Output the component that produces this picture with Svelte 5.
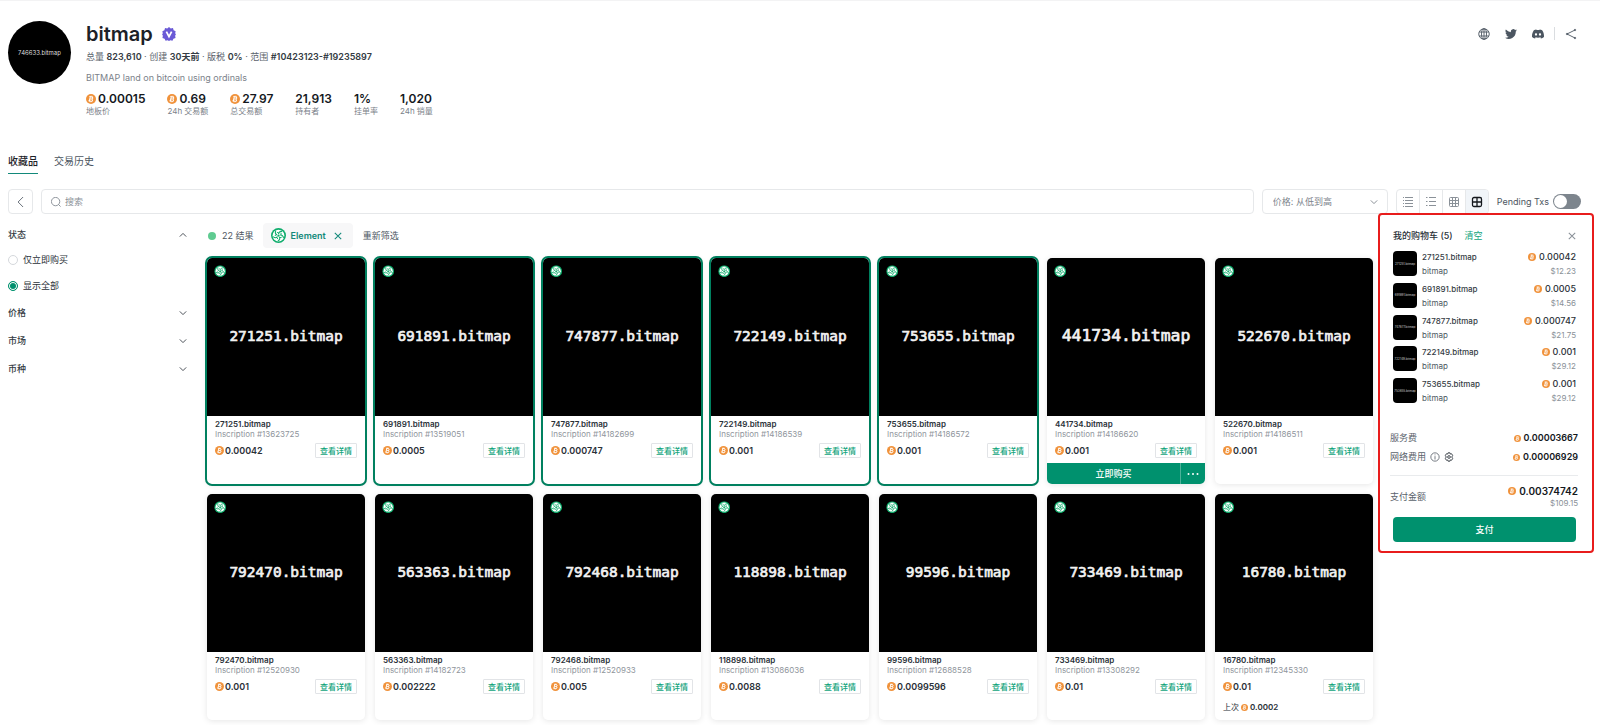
<script lang="ts">
  let search = '';
  let sort = 'asc';
  let status = 'all';
  let view = 'large';
  let pending = false;

  const stats = [
    { value: '0.00015', label: '地板价', btc: true },
    { value: '0.69', label: '24h 交易额', btc: true },
    { value: '27.97', label: '总交易额', btc: true },
    { value: '21,913', label: '持有者', btc: false },
    { value: '1%', label: '挂单率', btc: false },
    { value: '1,020', label: '24h 销量', btc: false }
  ];

  const items = [
    { name: '271251.bitmap', no: '13623725', price: '0.00042', selected: true },
    { name: '691891.bitmap', no: '13519051', price: '0.0005', selected: true },
    { name: '747877.bitmap', no: '14182699', price: '0.000747', selected: true },
    { name: '722149.bitmap', no: '14186539', price: '0.001', selected: true },
    { name: '753655.bitmap', no: '14186572', price: '0.001', selected: true },
    { name: '441734.bitmap', no: '14186620', price: '0.001', active: true },
    { name: '522670.bitmap', no: '14186511', price: '0.001' },
    { name: '792470.bitmap', no: '12520930', price: '0.001' },
    { name: '563363.bitmap', no: '14182723', price: '0.002222' },
    { name: '792468.bitmap', no: '12520933', price: '0.005' },
    { name: '118898.bitmap', no: '13086036', price: '0.0088' },
    { name: '99596.bitmap', no: '12688528', price: '0.0099596' },
    { name: '733469.bitmap', no: '13308292', price: '0.01' },
    { name: '16780.bitmap', no: '12345330', price: '0.01', last: '0.0002' }
  ];

  const cart = [
    { name: '271251.bitmap', price: '0.00042', usd: '$12.23' },
    { name: '691891.bitmap', price: '0.0005', usd: '$14.56' },
    { name: '747877.bitmap', price: '0.000747', usd: '$21.75' },
    { name: '722149.bitmap', price: '0.001', usd: '$29.12' },
    { name: '753655.bitmap', price: '0.001', usd: '$29.12' }
  ];

  const views = ['detail', 'list', 'small', 'large'];
  const filters = ['价格', '市场', '币种'];
  const blades = [0, 72, 144, 216, 288];
</script>

<!-- shared symbols -->
<svg class="defs" aria-hidden="true">
  <symbol id="btc" viewBox="0 0 16 16">
    <circle cx="8" cy="8" r="8" fill="#f0923b" />
    <g transform="rotate(12 8 8)" fill="none" stroke="#fff" stroke-width="1.5">
      <path d="M6 4.500v7M4.600 4.500H8.800a1.700 1.700 0 0 1 0 3.400H6M8.800 7.900h.4a1.800 1.800 0 0 1 0 3.600H4.600" />
      <path d="M7 2.800v1.700M9 2.800v1.700M7 11.500v1.700M9 11.500v1.700" stroke-width="1" />
    </g>
  </symbol>
  <symbol id="element" viewBox="0 0 24 24">
    <circle cx="12" cy="12" r="12" fill="#10ad6d" />
    <circle cx="12" cy="12" r="9.4" fill="#fff" />
    {#each blades as deg}
      <path d="M12 9.600C12.400 7 14.500 5.200 18 5.400" fill="none" stroke="#10ad6d" stroke-width="1.7" transform="rotate({deg} 12 12)" />
      <path d="M12.200 7.800 9.400 6.800" fill="none" stroke="#10ad6d" stroke-width="1.4" transform="rotate({deg} 12 12)" />
    {/each}
    <circle cx="12" cy="12" r="1.800" fill="#10ad6d" />
  </symbol>
  <symbol id="chevron" viewBox="0 0 10 10">
    <path d="m1 3 4 4 4-4" fill="none" stroke="currentColor" stroke-width="1.1" />
  </symbol>
  <symbol id="close" viewBox="0 0 10 10">
    <path d="m1 1 8 8M9 1 1 9" fill="none" stroke="currentColor" stroke-width="1.3" />
  </symbol>
</svg>

<div class="page">
  <header>
    <div class="avatar">746633.bitmap</div>
    <div class="info">
      <h1>
        bitmap
        <svg class="badge" viewBox="0 0 24 24">
          <path d="m12 0 3 2.4 3.8-.5 1.1 3.7 3.5 1.7-.9 3.7L24 12l-1.5 3.2.7 3.7-3.6 1.4-1.7 3.3-3.5-.8L12 24l-2.400-1.200-3.500.8-1.700-3.300-3.600-1.400.7-3.700L0 12l1.500-1-.9-3.700 3.500-1.700 1.100-3.700 3.800.5z" fill="#6a5ad6" />
          <path d="m7.500 8 4.500 8.500L16.500 8" fill="none" stroke="#fff" stroke-width="3" />
        </svg>
      </h1>
      <p class="meta">总量 <b>823,610</b> · 创建 <b>30天前</b> · 版税 <b>0%</b> · 范围 <b>#10423123-#19235897</b></p>
      <p class="desc">BITMAP land on bitcoin using ordinals</p>
      <dl class="stats">
        {#each stats as s}
          <div>
            <dd>{#if s.btc}<svg class="btc"><use href="#btc" /></svg>{/if}{s.value}</dd>
            <dt>{s.label}</dt>
          </div>
        {/each}
      </dl>
    </div>
    <nav class="social">
      <a href="#site" aria-label="Website">
        <svg viewBox="0 0 24 24" fill="none" stroke="currentColor" stroke-width="1.8"><circle cx="12" cy="12" r="10.5" /><ellipse cx="12" cy="12" rx="5" ry="10.5" /><path d="M2.5 8h19M2.5 16h19M12 1.5v21" /></svg>
      </a>
      <a href="#twitter" aria-label="Twitter">
        <svg viewBox="0 0 24 24" fill="currentColor"><path d="M24 4.6a10 10 0 0 1-2.8.8 5 5 0 0 0 2.1-2.7c-1 .6-2 1-3.1 1.200a4.900 4.900 0 0 0-8.400 4.500A14 14 0 0 1 1.700 3.200a4.900 4.900 0 0 0 1.500 6.500 4.900 4.900 0 0 1-2.200-.6c0 2.300 1.600 4.400 3.900 4.900a5 5 0 0 1-2.200.1 4.900 4.900 0 0 0 4.600 3.400A9.900 9.900 0 0 1 0 19.500a14 14 0 0 0 21.500-12.400A10 10 0 0 0 24 4.600z" /></svg>
      </a>
      <a href="#discord" aria-label="Discord">
        <svg viewBox="0 0 24 24" fill="currentColor" fill-rule="evenodd"><path d="M20.3 4.400A19.800 19.800 0 0 0 15.400 2.900l-.7 1.300a18.300 18.300 0 0 0-5.400 0l-.7-1.300a19.700 19.700 0 0 0-4.900 1.500C.5 9-.3 13.600.1 18.100a19.900 19.900 0 0 0 6 3l1.300-2-1.900-1 .4-.3a14.200 14.200 0 0 0 12.200 0l.4.3-1.900 1 1.300 2a19.800 19.800 0 0 0 6-3c.5-5.200-.8-9.700-3.600-13.700zM8 15.300c-1.200 0-2.200-1.100-2.200-2.400S6.800 10.500 8 10.500s2.200 1.100 2.200 2.400-1 2.400-2.200 2.400zm8 0c-1.200 0-2.200-1.100-2.200-2.400s1-2.400 2.200-2.400 2.200 1.100 2.200 2.400-1 2.400-2.200 2.400z" /></svg>
      </a>
      <i></i>
      <a href="#share" aria-label="Share">
        <svg viewBox="0 0 24 24" fill="none" stroke="currentColor" stroke-width="1.8"><path d="M20 4 4 12l16 8" /><circle cx="4" cy="12" r="1.5" /><circle cx="20" cy="4" r="1.5" /><circle cx="20" cy="20" r="1.5" /></svg>
      </a>
    </nav>
  </header>

  <nav class="tabs">
    <a href="#items" class="on">收藏品</a>
    <a href="#history">交易历史</a>
  </nav>

  <div class="toolbar">
    <button class="back" aria-label="收起">
      <svg viewBox="0 0 12 12"><path d="m8.500 0-6 6 6 6" fill="none" stroke="currentColor" stroke-width="1.2" /></svg>
    </button>
    <label class="search">
      <svg viewBox="0 0 12 12" fill="none" stroke="currentColor"><circle cx="5.500" cy="5.500" r="5" /><path d="m9 9 2.500 2.500" /></svg>
      <input type="text" placeholder="搜索" aria-label="搜索" bind:value={search} />
    </label>
    <div class="sort">
      <select bind:value={sort} aria-label="排序">
        <option value="asc">价格: 从低到高</option>
      </select>
      <svg><use href="#chevron" /></svg>
    </div>
    <div class="views">
      {#each views as v}
        <button class:on={view === v} aria-label={v} on:click={() => (view = v)}>
          <svg viewBox="0 0 12 12" fill="none" stroke="currentColor">
            {#if v === 'detail'}
              <path d="M1 1.500h1M1 4.500h1M1 7.500h1M1 10.500h1M3 1.500h8M3 4.500h8M3 7.500h8M3 10.500h8" />
            {:else if v === 'list'}
              <path d="M1 1.500h1.500M1 5.500h1.500M1 9.500h1.500M4 1.500h7M4 5.500h7M4 9.500h7" />
            {:else if v === 'small'}
              <rect x="1.500" y="1.500" width="9" height="9" rx="1" /><path d="M4.500 1.500v9M7.500 1.500v9M1.500 4.500h9M1.500 7.500h9" />
            {:else}
              <rect x="1.500" y="1.500" width="9" height="9" rx="1.500" stroke-width="1.300" /><path d="M6 1.500v9M1.500 6h9" stroke-width="1.300" />
            {/if}
          </svg>
        </button>
      {/each}
    </div>
    <label class="pending">Pending Txs <input type="checkbox" role="switch" bind:checked={pending} /></label>
  </div>

  <div class="body">
    <aside class="filters">
      <button class="fold open">状态 <svg><use href="#chevron" /></svg></button>
      <label><input type="radio" value="buy" bind:group={status} />仅立即购买</label>
      <label><input type="radio" value="all" bind:group={status} />显示全部</label>
      {#each filters as f}
        <button class="fold">{f} <svg><use href="#chevron" /></svg></button>
      {/each}
    </aside>

    <main>
      <div class="results">
        <span class="dot"></span>
        <span class="count">22 结果</span>
        <span class="chip">
          <svg class="logo"><use href="#element" /></svg>
          Element
          <button aria-label="移除"><svg><use href="#close" /></svg></button>
        </span>
        <button class="reset">重新筛选</button>
      </div>

      <div class="grid">
        {#each items as item}
          <article class:selected={item.selected}>
            <svg class="art" viewBox="0 0 240 240">
              <text x="120" y="126" text-anchor="middle" class:big={item.active}>{item.name}</text>
              <use href="#element" x="11" y="11" width="18" height="18" />
            </svg>
            <div class="detail">
              <h2>{item.name}</h2>
              <p>Inscription #{item.no}</p>
              <div class="price">
                <span><svg class="btc"><use href="#btc" /></svg>{item.price}</span>
                <button>查看详情</button>
              </div>
              {#if item.last}
                <div class="last">上次 <svg class="btc"><use href="#btc" /></svg><b>{item.last}</b></div>
              {/if}
            </div>
            {#if item.active}
              <div class="buy">
                <button>立即购买</button>
                <button class="more" aria-label="更多">
                  <svg viewBox="0 0 12 4" fill="currentColor"><circle cx="1.500" cy="2" r="1" /><circle cx="6" cy="2" r="1" /><circle cx="10.500" cy="2" r="1" /></svg>
                </button>
              </div>
            {/if}
          </article>
        {/each}
      </div>
    </main>

    <aside class="cart">
      <div class="cart-head">
        <h2>我的购物车 (5)</h2>
        <button class="clear">清空</button>
        <button class="close" aria-label="关闭"><svg><use href="#close" /></svg></button>
      </div>
      <ul>
        {#each cart as c}
          <li>
            <div class="thumb">
              <svg viewBox="0 0 24 24"><text x="12" y="13" text-anchor="middle">{c.name}</text></svg>
            </div>
            <div class="who"><b>{c.name}</b><span>bitmap</span></div>
            <div class="cost"><b><svg class="btc"><use href="#btc" /></svg>{c.price}</b><span>{c.usd}</span></div>
          </li>
        {/each}
      </ul>
      <div class="fees">
        <div class="fee"><span>服务费</span><b><svg class="btc"><use href="#btc" /></svg>0.00003667</b></div>
        <div class="fee">
          <span>
            网络费用
            <svg viewBox="0 0 12 12" fill="none" stroke="currentColor"><circle cx="6" cy="6" r="5" /><path d="M6 5v4M6 3v1" /></svg>
            <svg class="gear" viewBox="0 0 12 12" fill="none" stroke="currentColor" stroke-width="1.1"><path d="m4.800 1h2.400l.4 1.500 1.500-.4 1.300 2.100L9.300 6l1.100 1.800-1.300 2.100-1.500-.4-.4 1.500H4.800l-.4-1.500-1.500.4-1.300-2.100L2.700 6 1.600 4.200l1.300-2.100 1.500.4z" /><circle cx="6" cy="6" r="1.600" /></svg>
          </span>
          <b><svg class="btc"><use href="#btc" /></svg>0.00006929</b>
        </div>
      </div>
      <div class="total">
        <span>支付金额</span>
        <div class="cost"><b><svg class="btc"><use href="#btc" /></svg>0.00374742</b><span>$109.15</span></div>
      </div>
      <button class="pay">支付</button>
    </aside>
  </div>
</div>

<style>
  :global(body) {
    margin: 0;
    background: #fff;
    color: #2a3138;
    font-family: Inter, "Noto Sans CJK SC", sans-serif;
    font-size: 9px;
    line-height: 12px;
  }

  .page {
    border-top: 1px solid #f3f3f4;
    height: 100vh;
    box-sizing: border-box;
    overflow: hidden;
  }

  .defs {
    display: none;
  }

  h1, h2, p, ul, dl, dd {
    margin: 0;
    padding: 0;
  }

  button, input, select {
    font: inherit;
    color: inherit;
    margin: 0;
    padding: 0;
    border: none;
    background: none;
    box-sizing: border-box;
  }

  button {
    cursor: pointer;
  }

  a {
    color: inherit;
    text-decoration: none;
  }

  b {
    font-weight: 600;
  }

  svg {
    display: block;
    flex: none;
    width: 10px;
    height: 10px;
  }

  header {
    display: flex;
    align-items: flex-start;
    padding: 20px 23px 0 8px;
  }

  .avatar {
    width: 63px;
    height: 63px;
    border-radius: 50%;
    background: #000;
    color: #ddd;
    font-size: 6px;
    display: flex;
    align-items: center;
    justify-content: center;
  }

  .info {
    flex: 1;
    margin-left: 15px;
  }

  h1 {
    display: flex;
    align-items: center;
    gap: 9px;
    font-size: 20px;
    line-height: 26px;
    font-weight: 600;
    color: #1c2127;
  }

  .badge {
    width: 14px;
    height: 14px;
  }

  .meta {
    margin-top: 4px;
    color: #5b636c;
  }

  .meta b {
    color: #343b43;
  }

  .desc {
    margin-top: 9px;
    color: #7b828a;
  }

  .stats {
    display: flex;
    gap: 22px;
    margin-top: 8px;
  }

  .stats dd {
    display: flex;
    align-items: center;
    gap: 2px;
    font-size: 12px;
    line-height: 14px;
    font-weight: 600;
    color: #14181d;
  }

  .stats dt {
    font-size: 8px;
    line-height: 10px;
    color: #7b828a;
  }

  .social {
    display: flex;
    align-items: center;
    gap: 15px;
    padding-top: 6px;
    color: #4c5661;
  }

  .social svg {
    width: 12px;
    height: 12px;
  }

  .social i {
    width: 1px;
    height: 13px;
    background: #dadde0;
    margin: 0 -5px;
  }

  .tabs {
    display: flex;
    gap: 16px;
    padding-left: 8px;
    margin-top: 33px;
    font-size: 10px;
    line-height: 24px;
    color: #4c5661;
  }

  .tabs a {
    border-bottom: 1px solid transparent;
  }

  .tabs .on {
    color: #1c2127;
    font-weight: 500;
    border-color: #12897a;
  }

  .toolbar {
    display: flex;
    align-items: center;
    gap: 8px;
    padding: 0 19px 0 8px;
    margin-top: 15px;
  }

  .back, .search, .sort, .views {
    height: 25px;
    box-sizing: border-box;
    border: 1px solid #e6e8ea;
    border-radius: 4px;
  }

  .back {
    width: 25px;
    display: grid;
    place-items: center;
    color: #6b737c;
  }

  .search {
    flex: 1;
    display: flex;
    align-items: center;
    gap: 4px;
    padding-left: 9px;
    color: #7b828a;
  }

  .search input {
    flex: 1;
    outline: none;
  }

  .search input::placeholder {
    color: #8a9198;
  }

  .sort {
    width: 126px;
    display: flex;
    align-items: center;
    padding-right: 9px;
    color: #7b828a;
  }

  .sort select {
    flex: 1;
    height: 23px;
    padding-left: 10px;
    appearance: none;
  }

  .sort svg {
    width: 8px;
    height: 8px;
  }

  .views {
    display: flex;
    overflow: hidden;
    color: #8a9198;
  }

  .views button {
    width: 23px;
    display: grid;
    place-items: center;
    border-left: 1px solid #e6e8ea;
  }

  .views button:first-child {
    width: 22px;
    border-left: none;
  }

  .views .on {
    background: #f1f5f9;
    color: #14181d;
  }

  .views svg {
    width: 12px;
    height: 12px;
  }

  .pending {
    display: flex;
    align-items: center;
    gap: 4px;
    color: #4c5661;
  }

  .pending input {
    appearance: none;
    width: 28px;
    height: 15px;
    border-radius: 8px;
    background: #7d858d;
    padding: 1px;
  }

  .pending input::before {
    content: '';
    display: block;
    width: 13px;
    height: 13px;
    border-radius: 50%;
    background: #fff;
  }

  .pending input:checked::before {
    margin-left: auto;
  }

  .body {
    display: flex;
    align-items: flex-start;
    padding: 0 6px 0 8px;
  }

  .filters {
    width: 179px;
    display: flex;
    flex-direction: column;
    padding-top: 15px;
  }

  .fold {
    display: flex;
    align-items: center;
    justify-content: space-between;
    line-height: 12px;
    margin-bottom: 16px;
    color: #343b43;
    font-weight: 500;
  }

  .fold svg {
    width: 8px;
    height: 8px;
  }

  .open {
    margin-bottom: 13px;
  }

  .open svg {
    rotate: 180deg;
  }

  .filters label {
    display: flex;
    align-items: center;
    gap: 5px;
    margin-bottom: 14px;
  }

  .filters label + .fold {
    margin-top: 1px;
  }

  .filters input {
    appearance: none;
    width: 10px;
    height: 10px;
    border: 1px solid #d5d8dc;
    border-radius: 50%;
  }

  .filters input:checked {
    border-color: #00916e;
    background: #00916e;
    box-shadow: inset 0 0 0 1px #fff;
  }

  main {
    flex: 1;
    margin: 0 5px 0 20px;
  }

  .results {
    display: flex;
    align-items: center;
    padding-top: 9px;
    margin-bottom: 10px;
    color: #4c5661;
  }

  .dot {
    width: 8px;
    height: 8px;
    border-radius: 50%;
    background: #5fcb91;
    margin: 0 6px 0 1px;
  }

  .chip {
    display: flex;
    align-items: center;
    gap: 5px;
    height: 25px;
    padding: 0 11px 0 8px;
    margin: 0 10px 0 9px;
    border-radius: 4px;
    background: #f7f7f8;
    color: #12897a;
    font-weight: 600;
  }

  .logo {
    width: 15px;
    height: 15px;
  }

  .chip button svg {
    width: 8px;
    height: 8px;
    margin-left: 3px;
  }

  .grid {
    display: grid;
    grid-template-columns: repeat(7, 1fr);
    grid-auto-rows: 226px;
    gap: 10px;
  }

  article {
    display: flex;
    flex-direction: column;
    border-radius: 5px;
    background: #fff;
    box-shadow: 0 1px 6px rgba(0, 0, 0, 0.1);
  }

  .selected {
    outline: 2px solid #00805f;
  }

  .art {
    width: 100%;
    height: auto;
    background: #000;
    border-radius: 5px 5px 0 0;
  }

  .art text {
    font-family: "DejaVu Sans Mono", monospace;
    font-size: 22px;
    fill: #f2f2f2;
    stroke: #f2f2f2;
  }

  .art .big {
    font-size: 25px;
  }

  .detail {
    flex: 1;
    padding: 3px 8px 0;
  }

  .detail h2 {
    font-size: 8px;
    line-height: 10px;
    font-weight: 600;
  }

  .detail p {
    font-size: 8px;
    line-height: 10px;
    color: #8f959c;
  }

  .price {
    display: flex;
    align-items: center;
    justify-content: space-between;
    margin-top: 4px;
  }

  .price span {
    display: flex;
    align-items: center;
    gap: 1px;
    font-weight: 600;
  }

  .price .btc {
    width: 9px;
    height: 9px;
  }

  .price button {
    width: 42px;
    height: 15px;
    border: 1px solid #e2e4e7;
    border-radius: 1px;
    color: #12a47c;
    font-size: 8px;
    line-height: 12px;
    font-weight: 500;
  }

  .last {
    display: flex;
    align-items: center;
    gap: 2px;
    margin-top: 7px;
    font-size: 8px;
  }

  .last .btc {
    width: 7px;
    height: 7px;
  }

  .buy {
    display: flex;
    height: 21px;
    border-radius: 0 0 5px 5px;
    background: #00916e;
    color: #fff;
    font-weight: 500;
  }

  .buy button {
    flex: 1;
  }

  .buy .more {
    flex: none;
    width: 25px;
    display: grid;
    place-items: center;
    border-left: 1px solid #4cb299;
  }

  .more svg {
    width: 12px;
    height: 4px;
  }

  .cart {
    position: relative;
    width: 216px;
    box-sizing: border-box;
    margin-top: -1px;
    padding: 15px 14px 9px 10px;
    border: 2px solid #e81c1c;
    border-radius: 4px;
    background: #fff;
  }

  .cart-head, .cart ul {
    padding: 0 2px 0 3px;
  }

  .cart-head {
    display: flex;
    align-items: center;
    gap: 12px;
  }

  .cart-head h2 {
    font-size: 9px;
    font-weight: 500;
  }

  .clear {
    color: #12a47c;
  }

  .close {
    margin-left: auto;
    color: #8a9198;
  }

  .close svg {
    width: 8px;
    height: 8px;
  }

  .cart ul {
    height: 153px;
    display: flex;
    flex-direction: column;
    justify-content: space-between;
    margin-top: 9px;
  }

  li {
    display: flex;
    gap: 5px;
  }

  .thumb {
    width: 24px;
    height: 25px;
    border-radius: 4px;
    background: #000;
    display: grid;
    place-items: center;
  }

  .thumb svg {
    width: 24px;
    height: 24px;
  }

  .thumb text {
    font-size: 3px;
    fill: #ccc;
  }

  .who {
    flex: 1;
    display: flex;
    flex-direction: column;
    font-size: 8px;
    color: #4c5661;
  }

  .who b {
    font-weight: 500;
    color: #343b43;
  }

  .cost {
    display: flex;
    flex-direction: column;
    align-items: flex-end;
  }

  li .who, li .cost {
    gap: 2px;
  }

  .cost b, .fee b {
    display: flex;
    align-items: center;
    gap: 3px;
  }

  .cost b {
    font-weight: 500;
  }

  .cost span {
    font-size: 8px;
    color: #8a9198;
  }

  .cost .btc {
    width: 8px;
    height: 8px;
  }

  .fees {
    display: flex;
    flex-direction: column;
    gap: 7px;
    margin-top: 28px;
    padding-bottom: 12px;
    border-bottom: 1px solid #e9ebed;
  }

  .fee {
    display: flex;
    align-items: center;
    justify-content: space-between;
    color: #5b636c;
  }

  .fee b {
    color: #14181d;
  }

  .fee .btc {
    width: 7px;
    height: 7px;
  }

  .fee span {
    display: flex;
    align-items: center;
    gap: 4px;
  }

  .gear {
    color: #343b43;
  }

  .total {
    display: flex;
    align-items: center;
    justify-content: space-between;
    margin-top: 9px;
    color: #5b636c;
  }

  .total b {
    font-size: 10px;
    font-weight: 600;
    color: #14181d;
  }

  .pay {
    display: block;
    width: calc(100% - 5px);
    height: 25px;
    margin: 8px 2px 0 3px;
    border-radius: 4px;
    background: #00916e;
    color: #fff;
    font-weight: 500;
  }
</style>
